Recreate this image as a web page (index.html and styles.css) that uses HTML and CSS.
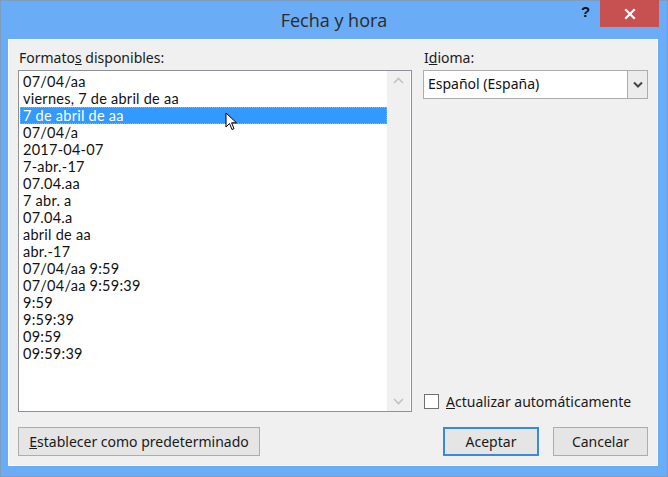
FILE: index.html
```html
<!DOCTYPE html>
<html lang="es">
<head>
<meta charset="utf-8">
<title>Fecha y hora</title>
<link rel="stylesheet" href="styles.css">
</head>
<body>
<div class="window">
  <div class="titlebar">
    <div class="title">Fecha y hora</div>
    <div class="help">?</div>
    <div class="close">
      <svg width="14" height="14" viewBox="0 0 14 14"><path d="M3 3 L11 11 M11 3 L3 11" stroke="#fff" stroke-width="2.2" stroke-linecap="square"/></svg>
    </div>
  </div>
  <div class="client">
    <div class="main">
      <div class="leftcol">
        <div class="label">Formato<u>s</u> disponibles:</div>
        <div class="listbox">
          <ul class="items">
            <li>07/04/aa</li>
            <li>viernes, 7 de abril de aa</li>
            <li class="selected">7 de abril de aa</li>
            <li>07/04/a</li>
            <li>2017-04-07</li>
            <li>7-abr.-17</li>
            <li>07.04.aa</li>
            <li>7 abr. a</li>
            <li>07.04.a</li>
            <li>abril de aa</li>
            <li>abr.-17</li>
            <li>07/04/aa 9:59</li>
            <li>07/04/aa 9:59:39</li>
            <li>9:59</li>
            <li>9:59:39</li>
            <li>09:59</li>
            <li>09:59:39</li>
          </ul>
          <div class="scrollbar">
            <svg width="11" height="7" viewBox="0 0 11 7"><path d="M1 6 L5.5 1.5 L10 6" fill="none" stroke="#c2c2c2" stroke-width="1.6"/></svg>
            <svg width="11" height="7" viewBox="0 0 11 7"><path d="M1 1 L5.5 5.5 L10 1" fill="none" stroke="#c2c2c2" stroke-width="1.6"/></svg>
          </div>
          <svg class="cursor" width="14" height="20" viewBox="0 0 14 20"><path d="M1 1 L1 15 L4.5 11.5 L7 17.5 L9 16.6 L6.6 10.8 L11.5 10.8 Z" fill="#fff" stroke="#000" stroke-width="1" stroke-linejoin="miter"/></svg>
        </div>
      </div>
      <div class="rightcol">
        <div class="label">I<u>d</u>ioma:</div>
        <div class="combo">
          <div class="combo-text">Español (España)</div>
          <div class="combo-btn">
            <svg width="10" height="7" viewBox="0 0 10 7"><path d="M1 1.5 L5 5.5 L9 1.5" fill="none" stroke="#444" stroke-width="2"/></svg>
          </div>
        </div>
        <div class="check">
          <span class="box"></span>
          <span class="check-label"><u>A</u>ctualizar automáticamente</span>
        </div>
      </div>
    </div>
    <div class="footer">
      <button class="btn wide"><u>E</u>stablecer como predeterminado</button>
      <div class="spacer"></div>
      <button class="btn default">Aceptar</button>
      <button class="btn">Cancelar</button>
    </div>
  </div>
</div>
</body>
</html>
```

FILE: styles.css
```css
* { box-sizing: border-box; }
html, body { margin: 0; padding: 0; }
body {
  width: 668px;
  height: 477px;
  overflow: hidden;
  font-family: "Noto Sans", "Open Sans", sans-serif;
  font-size: 14px;
  color: #1a1a1a;
}
.window {
  width: 668px;
  height: 477px;
  background: #6aacf5;
  border: 1px solid #7c9cc0;
  display: flex;
  flex-direction: column;
}
.titlebar {
  height: 38px;
  position: relative;
  display: flex;
  align-items: center;
  justify-content: center;
}
.title {
  font-family: "Open Sans", "Noto Sans", sans-serif;
  font-size: 18px;
  color: #2b2b2b;
  margin-top: -1px;
}
.help {
  position: absolute;
  left: 580px;
  top: 2px;
  font-family: "Liberation Sans", sans-serif;
  font-weight: bold;
  font-size: 15px;
  color: #111;
}
.close {
  position: absolute;
  left: 599px;
  top: -1px;
  width: 59px;
  height: 27px;
  background: #c75050;
  display: flex;
  align-items: center;
  justify-content: center;
}
.client {
  margin: 0 9px 10px 7px;
  flex: 1;
  background: #f0f0f0;
  border: 1px solid #f8f8f8;
  padding: 8px 9px 9px 9px;
  display: flex;
  flex-direction: column;
}
.main {
  display: flex;
  gap: 11px;
  flex: 1;
}
.leftcol {
  width: 394px;
  display: flex;
  flex-direction: column;
}
.label {
  height: 22px;
  line-height: 20px;
  padding-left: 1px;
  color: #1a1a1a;
}
.listbox {
  position: relative;
  height: 342px;
  background: #fff;
  border: 1px solid #8e9199;
  display: flex;
}
.items {
  list-style: none;
  margin: 0;
  padding: 2px 0 0 1px;
  flex: 1;
  font-family: "Lato", "Noto Sans", sans-serif;
  font-size: 14.5px;
  letter-spacing: 0.25px;
}
.items li {
  height: 17px;
  line-height: 15px;
  padding-left: 2px;
  white-space: nowrap;
  color: #111;
  border: 1px solid transparent;
}
.items li.selected {
  background: #3399ff;
  color: #fff;
  border: 1px dotted #5a3a10;
  outline: 1px dotted #f0a040;
  outline-offset: -1px;
}
.scrollbar {
  width: 23px;
  background: #f0f0f0;
  display: flex;
  flex-direction: column;
  justify-content: space-between;
  align-items: center;
  padding: 6px 0 6px 0;
  margin-right: 1px;
}
.cursor {
  position: absolute;
  left: 206px;
  top: 41px;
}
.rightcol {
  flex: 1;
  display: flex;
  flex-direction: column;
}
.combo {
  height: 29px;
  background: #fff;
  border: 1px solid #acacac;
  display: flex;
  align-items: stretch;
}
.combo-text {
  flex: 1;
  padding-left: 4px;
  line-height: 26px;
  color: #111;
}
.combo-btn {
  width: 20px;
  background: #ececec;
  border-left: 1px solid #acacac;
  display: flex;
  align-items: center;
  justify-content: center;
}
.check {
  margin-top: auto;
  margin-bottom: 1px;
  display: flex;
  align-items: center;
  gap: 7px;
  padding-left: 1px;
}
.box {
  width: 15px;
  height: 15px;
  background: #fff;
  border: 1px solid #707070;
}
.check-label { color: #1a1a1a; }
.footer {
  display: flex;
  gap: 14px;
  margin-top: 15px;
  height: 29px;
}
.spacer { flex: 1; }
.btn {
  font-family: "Noto Sans", "Open Sans", sans-serif;
  font-size: 14px;
  color: #1a1a1a;
  background: #e5e5e5;
  border: 1px solid #adadad;
  height: 29px;
  width: 95px;
  padding: 0;
}
.btn.wide { width: 242px; }
.btn.default {
  border: 2px solid #3b88dc;
  width: 96px;
}
```
